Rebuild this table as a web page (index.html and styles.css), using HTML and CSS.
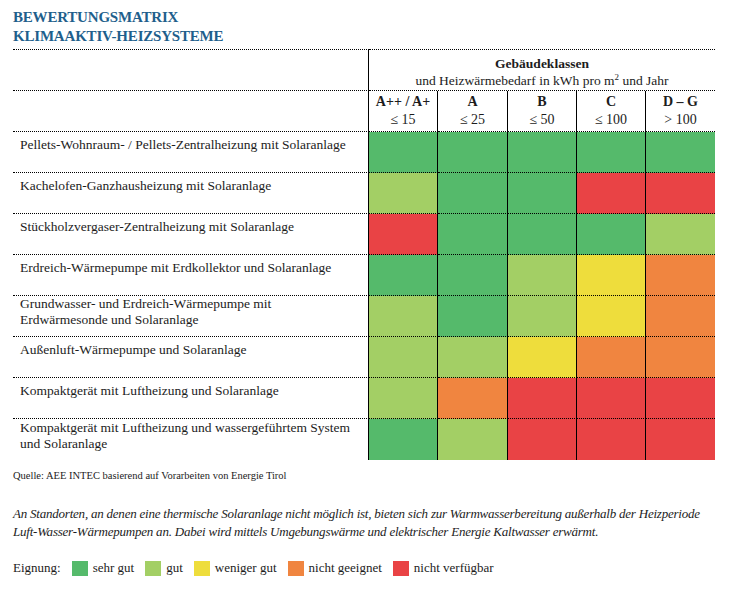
FILE: index.html
```html
<!DOCTYPE html>
<html lang="de">
<head>
<meta charset="utf-8">
<title>Bewertungsmatrix klimaaktiv-Heizsysteme</title>
<link rel="stylesheet" href="styles.css">
</head>
<body>
<div class="page">
  <h1 class="title">BEWERTUNGSMATRIX<br>KLIMAAKTIV-HEIZSYSTEME</h1>

  <table class="matrix">
    <colgroup>
      <col class="col-lbl">
      <col class="col-a">
      <col class="col-b">
      <col class="col-a">
      <col class="col-a">
      <col class="col-a">
    </colgroup>
    <thead>
      <tr class="h1">
        <th class="lbl"></th>
        <th class="group" colspan="5"><strong>Gebäudeklassen</strong><br>und Heizwärmebedarf in kWh pro m<sup>2</sup> und Jahr</th>
      </tr>
      <tr class="h2">
        <th class="lbl"></th>
        <th class="cls"><strong>A++ / A+</strong><br>≤ 15</th>
        <th class="cls"><strong>A</strong><br>≤ 25</th>
        <th class="cls"><strong>B</strong><br>≤ 50</th>
        <th class="cls"><strong>C</strong><br>≤ 100</th>
        <th class="cls"><strong>D – G</strong><br>&gt; 100</th>
      </tr>
    </thead>
    <tbody>
      <tr>
        <td class="lbl">Pellets-Wohnraum- / Pellets-Zentralheizung mit Solaranlage</td>
        <td class="c g"></td><td class="c g"></td><td class="c g"></td><td class="c g"></td><td class="c g"></td>
      </tr>
      <tr>
        <td class="lbl">Kachelofen-Ganzhausheizung mit Solaranlage</td>
        <td class="c l"></td><td class="c g"></td><td class="c g"></td><td class="c r"></td><td class="c r"></td>
      </tr>
      <tr>
        <td class="lbl">Stückholzvergaser-Zentralheizung mit Solaranlage</td>
        <td class="c r"></td><td class="c g"></td><td class="c g"></td><td class="c g"></td><td class="c l"></td>
      </tr>
      <tr>
        <td class="lbl">Erdreich-Wärmepumpe mit Erdkollektor und Solaranlage</td>
        <td class="c g"></td><td class="c g"></td><td class="c l"></td><td class="c y"></td><td class="c o"></td>
      </tr>
      <tr>
        <td class="lbl tight">Grundwasser- und Erdreich-Wärmepumpe mit<br>Erdwärmesonde und Solaranlage</td>
        <td class="c l"></td><td class="c g"></td><td class="c l"></td><td class="c y"></td><td class="c o"></td>
      </tr>
      <tr>
        <td class="lbl">Außenluft-Wärmepumpe und Solaranlage</td>
        <td class="c l"></td><td class="c l"></td><td class="c y"></td><td class="c o"></td><td class="c o"></td>
      </tr>
      <tr>
        <td class="lbl">Kompaktgerät mit Luftheizung und Solaranlage</td>
        <td class="c l"></td><td class="c o"></td><td class="c r"></td><td class="c r"></td><td class="c r"></td>
      </tr>
      <tr>
        <td class="lbl two">Kompaktgerät mit Luftheizung und wassergeführtem System<br>und Solaranlage</td>
        <td class="c g"></td><td class="c l"></td><td class="c r"></td><td class="c r"></td><td class="c r"></td>
      </tr>
    </tbody>
  </table>

  <p class="source">Quelle: AEE INTEC basierend auf Vorarbeiten von Energie Tirol</p>

  <p class="note">An Standorten, an denen eine thermische Solaranlage nicht möglich ist, bieten sich zur Warmwasserbereitung außerhalb der Heizperiode<br>Luft-Wasser-Wärmepumpen an. Dabei wird mittels Umgebungswärme und elektrischer Energie Kaltwasser erwärmt.</p>

  <div class="legend">
    <span class="legend-title">Eignung:</span>
    <span class="item"><span class="swatch g"></span>sehr gut</span>
    <span class="item"><span class="swatch l"></span>gut</span>
    <span class="item"><span class="swatch y"></span>weniger gut</span>
    <span class="item"><span class="swatch o"></span>nicht geeignet</span>
    <span class="item"><span class="swatch r"></span>nicht verfügbar</span>
  </div>
</div>
</body>
</html>
```

FILE: styles.css
```css
html, body {
  margin: 0;
  padding: 0;
  background: #ffffff;
}

body {
  font-family: "Liberation Serif", "DejaVu Serif", serif;
  color: #1c1c1c;
}

.page {
  padding: 8px 13px 0 13px;
}

.title {
  margin: 0;
  font-size: 15px;
  line-height: 19px;
  font-weight: bold;
  color: #1f5f8c;
  letter-spacing: -0.2px;
}

/* ---------- matrix ---------- */
.matrix {
  margin-top: 3px;
  width: 702px;
  table-layout: fixed;
  border-collapse: separate;
  border-spacing: 0;
  font-family: "Liberation Serif", "DejaVu Serif", serif;
  font-size: 13.5px;
  color: #1c1c1c;
}

.col-lbl { width: 356px; }
.col-a { width: 69px; }
.col-b { width: 70px; }

.matrix th,
.matrix td {
  padding: 0;
  vertical-align: top;
  border-bottom: 1px dotted #000;
}

.matrix thead .h1 th {
  border-top: 1px dotted #000;
}

.matrix tbody tr:last-child td {
  border-bottom: none;
}

.matrix .h1 { height: 42px; }
.matrix .h2 { height: 41px; }
.matrix tbody tr { height: 41px; }

.matrix .lbl {
  border-right: 1px solid #000;
  text-align: left;
  font-weight: normal;
  padding: 6px 0 0 7px;
  line-height: 13px;
  white-space: nowrap;
}

.matrix .lbl.tight {
  padding-top: 0;
  line-height: 15.5px;
}

.matrix .lbl.two {
  padding-top: 1px;
  line-height: 15.5px;
}

.matrix .group {
  text-align: center;
  font-weight: normal;
  line-height: 17px;
  padding-top: 5px;
}

.group strong {
  font-weight: bold;
}

.group sup {
  font-size: 9px;
  line-height: 0;
  vertical-align: 5px;
}

.matrix .cls {
  text-align: center;
  font-weight: normal;
  font-size: 14px;
  line-height: 18px;
  padding-top: 2px;
  border-right: 1px solid #000;
}

.matrix .cls:last-child {
  border-right: none;
}

.matrix .c {
  border-right: 1px solid #000;
}

.matrix .c:last-child {
  border-right: none;
}

/* colours */
.g { background: #55ba6b; }
.l { background: #a3cf65; }
.y { background: #eedd3c; }
.o { background: #f08540; }
.r { background: #e94345; }

/* ---------- footer texts ---------- */
.source {
  margin: 9px 0 0 0;
  font-size: 10.5px;
  line-height: 14px;
}

.note {
  margin: 22px 0 0 0;
  font-size: 13px;
  line-height: 18px;
  font-style: italic;
  letter-spacing: -0.22px;
  white-space: nowrap;
}

.legend {
  margin-top: 18px;
  display: flex;
  align-items: center;
  font-size: 13px;
  line-height: 18px;
}

.legend-title {
  margin-right: 11px;
}

.item {
  display: flex;
  align-items: center;
  margin-right: 11px;
}

.swatch {
  display: inline-block;
  width: 16px;
  height: 15px;
  margin-right: 5px;
}
```
